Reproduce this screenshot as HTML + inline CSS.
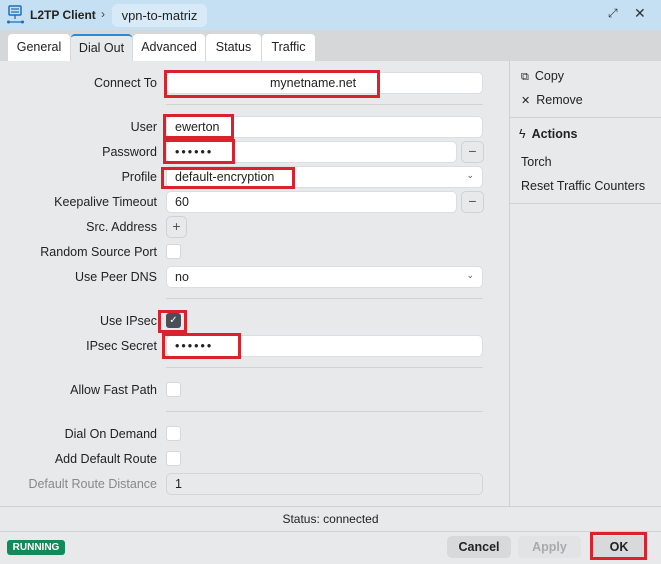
<!DOCTYPE html><html><head><style>
*{box-sizing:border-box;margin:0;padding:0}
body{width:661px;height:564px;background:#e8e9ea;font-family:"Liberation Sans",sans-serif;font-size:12.5px;color:#222;position:relative;overflow:hidden}
.a{position:absolute}
.hdr{left:0;top:0;width:661px;height:30px;background:#c6e0f3}
.tabbar{left:0;top:30px;width:661px;height:31px;background:#d5d7d9}
.tab{top:34px;height:27px;background:#fff;border-radius:4px 4px 0 0;font-size:12.5px;line-height:27px;text-align:center}
.tab.act{background:#e8e9ea;border-top:2px solid #2a8ad4;line-height:25px}
.lbl{left:0;width:157px;text-align:right;font-size:12.5px;color:#222}
.inp{background:#fff;border:1px solid #dcdde0;border-radius:5px;height:22px;line-height:20px;padding-left:8px}
.btn{width:23px;height:22px;border:1px solid #cfd1d4;border-radius:5px;background:#e8e9ea;text-align:center;line-height:19px;color:#555;font-size:14px}
.cb{width:15px;height:15px;background:#fff;border:1px solid #d6d7da;border-radius:3px}
.red{border:3px solid #d9222d}
.div{height:1px;background:#d0d2d4;left:166px;width:317px}
.chev{right:8px;top:-2px;font-size:9px;color:#555}
.side{left:509px;top:61px;width:152px;height:446px;border-left:1px solid #cfd1d3}
</style></head><body>
<div class="a hdr"></div>
<svg class="a" style="left:6px;top:5px" width="20" height="20" viewBox="0 0 20 20"><rect x="3" y="1" width="12" height="9" rx="1" fill="none" stroke="#1a6fb5" stroke-width="1.5"/><path d="M9 10v4M2 17h15M5 4h8M5 7h8" stroke="#1a6fb5" stroke-width="1.3"/><circle cx="2.5" cy="17" r="1.5" fill="#1a6fb5"/><circle cx="16.5" cy="17" r="1.5" fill="#1a6fb5"/></svg>
<div class="a" style="left:30px;top:8px;font-weight:bold;font-size:12px">L2TP Client</div>
<div class="a" style="left:101px;top:7px;font-size:12px;color:#444">›</div>
<div class="a" style="left:112px;top:4px;width:95px;height:23px;background:#d8eaf7;border-radius:6px;line-height:23px;text-align:center;font-size:13px">vpn-to-matriz</div>
<div class="a" style="left:608px;top:6px;font-size:12px;color:#333">⤢</div>
<div class="a" style="left:634px;top:5px;font-size:14px;color:#333">✕</div>
<div class="a tabbar"></div>
<div class="a tab" style="left:8px;width:62px">General</div>
<div class="a tab act" style="left:71px;width:61px">Dial Out</div>
<div class="a tab" style="left:133px;width:72px">Advanced</div>
<div class="a tab" style="left:206px;width:55px">Status</div>
<div class="a tab" style="left:262px;width:53px">Traffic</div>

<div class="a lbl" style="top:76px">Connect To</div>
<div class="a inp" style="left:166px;top:72px;width:317px;padding-left:103px">mynetname.net</div>
<div class="a div" style="top:104px"></div>
<div class="a lbl" style="top:120px">User</div>
<div class="a inp" style="left:166px;top:116px;width:317px">ewerton</div>
<div class="a lbl" style="top:145px">Password</div>
<div class="a inp" style="left:166px;top:141px;width:291px;letter-spacing:2px">••••••</div>
<div class="a btn" style="left:461px;top:141px">−</div>
<div class="a lbl" style="top:170px">Profile</div>
<div class="a inp" style="left:166px;top:166px;width:317px">default-encryption<span class="a chev">⌄</span></div>
<div class="a lbl" style="top:195px">Keepalive Timeout</div>
<div class="a inp" style="left:166px;top:191px;width:291px">60</div>
<div class="a btn" style="left:461px;top:191px">−</div>
<div class="a lbl" style="top:220px">Src. Address</div>
<div class="a btn" style="left:166px;top:216px;width:21px">+</div>
<div class="a lbl" style="top:245px">Random Source Port</div>
<div class="a cb" style="left:166px;top:244px"></div>
<div class="a lbl" style="top:270px">Use Peer DNS</div>
<div class="a inp" style="left:166px;top:266px;width:317px">no<span class="a chev">⌄</span></div>
<div class="a div" style="top:298px"></div>
<div class="a lbl" style="top:314px">Use IPsec</div>
<div class="a" style="left:166px;top:313px;width:15px;height:15px;background:#4a4f57;border-radius:3px;color:#fff;font-size:10px;text-align:center;line-height:15px">✓</div>
<div class="a lbl" style="top:339px">IPsec Secret</div>
<div class="a inp" style="left:166px;top:335px;width:317px;letter-spacing:2px">••••••</div>
<div class="a div" style="top:367px"></div>
<div class="a lbl" style="top:383px">Allow Fast Path</div>
<div class="a cb" style="left:166px;top:382px"></div>
<div class="a div" style="top:411px"></div>
<div class="a lbl" style="top:427px">Dial On Demand</div>
<div class="a cb" style="left:166px;top:426px"></div>
<div class="a lbl" style="top:452px">Add Default Route</div>
<div class="a cb" style="left:166px;top:451px"></div>
<div class="a lbl" style="top:477px;color:#888">Default Route Distance</div>
<div class="a inp" style="left:166px;top:473px;width:317px;background:#e8e9ea;border-color:#d3d5d7">1</div>

<div class="a red" style="left:164px;top:70px;width:216px;height:28px"></div>
<div class="a red" style="left:163px;top:114px;width:71px;height:25px"></div>
<div class="a red" style="left:163px;top:139px;width:72px;height:25px"></div>
<div class="a red" style="left:161px;top:167px;width:134px;height:22px"></div>
<div class="a red" style="left:158px;top:310px;width:29px;height:23px"></div>
<div class="a red" style="left:162px;top:333px;width:79px;height:26px"></div>

<div class="a side"></div>
<div class="a" style="left:521px;top:69px;font-size:12.5px"><span style="font-size:11px;margin-right:6px">⧉</span>Copy</div>
<div class="a" style="left:521px;top:93px;font-size:12.5px"><span style="font-size:11px;margin-right:6px">✕</span>Remove</div>
<div class="a" style="left:509px;top:117px;width:152px;height:1px;background:#cfd1d3"></div>
<div class="a" style="left:519px;top:127px;font-size:12.5px;font-weight:bold"><span style="margin-right:6px;font-weight:normal">ϟ</span>Actions</div>
<div class="a" style="left:521px;top:155px">Torch</div>
<div class="a" style="left:521px;top:179px">Reset Traffic Counters</div>
<div class="a" style="left:509px;top:203px;width:152px;height:1px;background:#cfd1d3"></div>

<div class="a" style="left:0;top:506px;width:661px;height:1px;background:#cfd1d3"></div>
<div class="a" style="left:0;top:512px;width:661px;text-align:center;font-size:12px">Status: connected</div>
<div class="a" style="left:0;top:531px;width:661px;height:1px;background:#cfd1d3"></div>
<div class="a" style="left:7px;top:540px;width:58px;height:15px;background:#138a5a;border-radius:3px;color:#fff;font-size:10px;font-weight:bold;text-align:center;line-height:15px">RUNNING</div>
<div class="a" style="left:447px;top:536px;width:64px;height:22px;background:#d8d9db;border-radius:5px;text-align:center;line-height:22px;font-weight:bold;font-size:12.5px">Cancel</div>
<div class="a" style="left:518px;top:536px;width:63px;height:22px;background:#e2e3e4;border-radius:5px;text-align:center;line-height:22px;font-weight:bold;color:#aaa;font-size:12.5px">Apply</div>
<div class="a" style="left:592px;top:536px;width:54px;height:22px;background:#d8d9db;border-radius:5px;text-align:center;line-height:22px;font-weight:bold;font-size:12.5px">OK</div>
<div class="a red" style="left:590px;top:532px;width:57px;height:28px"></div>
</body></html>
